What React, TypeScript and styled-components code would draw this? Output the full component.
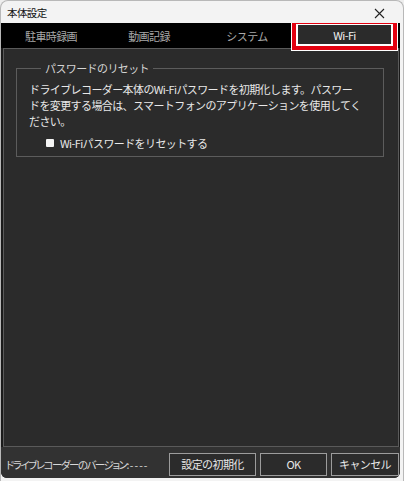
import React from "react";
import styled, { createGlobalStyle } from "styled-components";

const Global = createGlobalStyle`
  html, body { margin: 0; padding: 0; background: #eeeeee; }
  body {
    font-family: "Noto Sans CJK JP", "Noto Sans", sans-serif;
    -webkit-font-smoothing: antialiased;
  }
`;

const Window = styled.div`
  width: 404px;
  height: 481px;
  box-sizing: border-box;
  background: #f3f3f3;
  border: 1px solid #b8b8b8;
  border-bottom: none;
  border-radius: 8px 8px 0 0;
  display: flex;
  flex-direction: column;
  overflow: hidden;
`;

const TitleBar = styled.div`
  height: 22px;
  flex: none;
  display: flex;
  align-items: center;
  justify-content: space-between;
  padding: 0 18px 0 6px;
  font-size: 10.5px;
  letter-spacing: -0.6px;
  color: #111;
`;

const CloseButton = styled.svg`
  width: 11px;
  height: 11px;
  margin-top: 2px;
`;

const Body = styled.div`
  flex: 1;
  margin: 0 3px 3px 0;
  background: #1b1b1b;
  border-radius: 0 0 6px 6px;
  display: flex;
  flex-direction: column;
  overflow: hidden;
`;

const TabRow = styled.div`
  height: 25px;
  flex: none;
  background: #000;
  display: flex;
  padding-left: 1px;
`;

const Tab = styled.div<{ $active?: boolean }>`
  position: relative;
  width: 98px;
  box-sizing: border-box;
  display: flex;
  align-items: center;
  justify-content: center;
  font-size: 11px;
  letter-spacing: -0.6px;
  color: ${(p) => (p.$active ? "#f0f0f0" : "#a8a8a8")};
  ${(p) =>
    p.$active &&
    `
    margin: 1px 2px 3px 1px;
    width: 95px;
    background: #2b2b2b;
    border: 1px solid #ffffff;
  `}
`;

/* red highlight frame drawn over the selected tab */
const Highlight = styled.span`
  position: absolute;
  top: -5px;
  left: -6px;
  right: -6px;
  bottom: -6px;
  border: 4px solid #e3000f;
  box-shadow: 0 0 0 1px #ffffff, inset 0 0 0 1px #ffffff;
  pointer-events: none;
`;

const Panel = styled.div`
  flex: 1;
  margin: 0 1px 0 2px;
  background: #2b2b2b;
  border: 1px solid #5a5a5a;
  padding: 12px 14px 0 12px;
`;

const GroupBox = styled.fieldset`
  margin: 0;
  padding: 6px 10px 14px 12px;
  border: 1px solid #5c5c5c;
  height: 96px;
  box-sizing: border-box;
`;

const Legend = styled.legend`
  margin-left: 12px;
  padding: 0 4px;
  font-size: 11px;
  letter-spacing: -0.6px;
  color: #d4d4d4;
  line-height: 14px;
`;

const Description = styled.p`
  margin: 0;
  font-size: 11px;
  letter-spacing: -0.6px;
  line-height: 16px;
  color: #e8e8e8;
`;

const CheckRow = styled.label`
  display: flex;
  align-items: center;
  gap: 6px;
  margin: 6px 0 0 17px;
  font-size: 11px;
  letter-spacing: -0.6px;
  color: #e8e8e8;
`;

const CheckBox = styled.span`
  width: 8px;
  height: 8px;
  background: #f4f4f4;
  border-radius: 1px;
  flex: none;
`;

const Footer = styled.div`
  height: 31px;
  flex: none;
  background: #323232;
  display: flex;
  align-items: center;
  padding: 5px 1px 2px 5px;
  box-sizing: border-box;
  gap: 4px;
`;

const Version = styled.span`
  flex: 1;
  min-width: 0;
  white-space: nowrap;
  font-size: 10.5px;
  letter-spacing: -1.5px;
  font-feature-settings: "palt";
  color: #d8d8d8;
`;

const Dashes = styled.span`
  margin-left: 2px;
  letter-spacing: 1px;
`;

const Button = styled.button<{ $w: number }>`
  width: ${(p) => p.$w}px;
  height: 23px;
  flex: none;
  box-sizing: border-box;
  background: #2b2b2b;
  border: 1px solid #9c9c9c;
  color: #e8e8e8;
  font-family: inherit;
  font-size: 11px;
  letter-spacing: -0.6px;
  padding: 0;
`;

export default function App() {
  return (
    <>
      <Global />
      <Window>
        <TitleBar>
          <span>本体設定</span>
          <CloseButton viewBox="0 0 11 11">
            <path d="M1 1 L10 10 M10 1 L1 10" stroke="#222" strokeWidth="1.1" />
          </CloseButton>
        </TitleBar>
        <Body>
          <TabRow>
            <Tab>駐車時録画</Tab>
            <Tab>動画記録</Tab>
            <Tab>システム</Tab>
            <Tab $active>
              Wi-Fi
              <Highlight />
            </Tab>
          </TabRow>
          <Panel>
            <GroupBox>
              <Legend>パスワードのリセット</Legend>
              <Description>
                ドライブレコーダー本体のWi-Fiパスワードを初期化します。パスワー
                <br />
                ドを変更する場合は、スマートフォンのアプリケーションを使用してく
                <br />
                ださい。
              </Description>
              <CheckRow>
                <CheckBox />
                Wi-Fiパスワードをリセットする
              </CheckRow>
            </GroupBox>
          </Panel>
          <Footer>
            <Version>
              ドライブレコーダーのバージョン:<Dashes>----</Dashes>
            </Version>
            <Button $w={87}>設定の初期化</Button>
            <Button $w={67}>OK</Button>
            <Button $w={68}>キャンセル</Button>
          </Footer>
        </Body>
      </Window>
    </>
  );
}
